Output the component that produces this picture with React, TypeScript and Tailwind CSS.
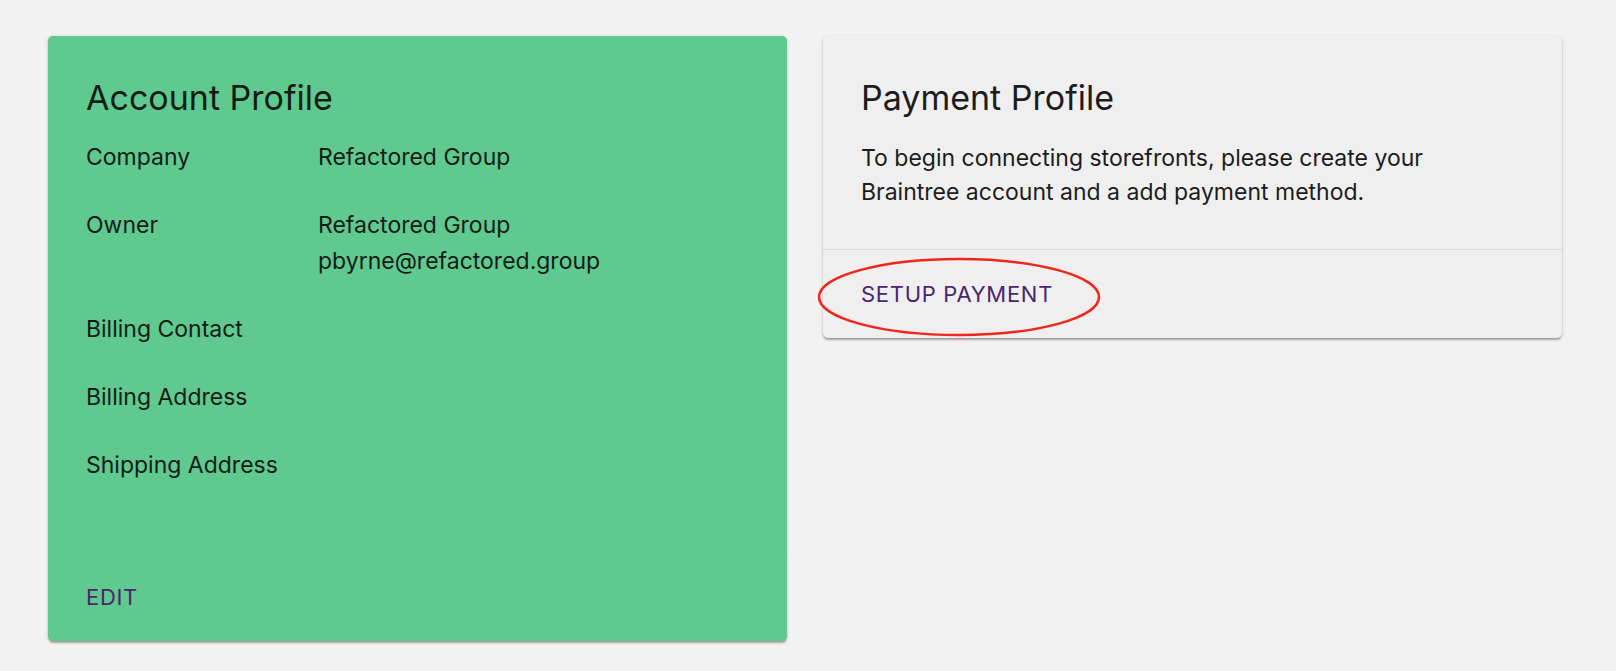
const purple = 'text-[#4b2670]'

function Row({ label, children }: { label: string; children?: React.ReactNode }) {
  return (
    <div className="mb-[32px] flex leading-[36px]">
      <div className="w-[232px] shrink-0">{label}</div>
      <div>{children}</div>
    </div>
  )
}

function AccountCard() {
  return (
    <div className="w-[739px] overflow-hidden rounded-[5px] bg-[#5fc98f] text-[#141c17] shadow-[0_3px_2px_-1px_rgba(0,0,0,0.22),0_1px_2px_0_rgba(0,0,0,0.14),0_1px_4px_0_rgba(0,0,0,0.12)]">
      <div className="px-[38px] pt-[38px] pb-[38px] text-[23px]">
        <h2 className="mb-[17px] text-[34px] leading-[48px] font-normal">Account Profile</h2>
        <Row label="Company">Refactored Group</Row>
        <Row label="Owner">
          <div>Refactored Group</div>
          <div>pbyrne@refactored.group</div>
        </Row>
        <Row label="Billing Contact" />
        <Row label="Billing Address" />
        <Row label="Shipping Address" />
      </div>
      <div className="flex h-[88px] items-center border-t border-[#66cc95] px-[38px]">
        <button className={`text-[22px] tracking-[0.7px] uppercase ${purple}`}>Edit</button>
      </div>
    </div>
  )
}

function PaymentCard() {
  return (
    <div className="w-[739px] rounded-[5px] bg-[#efefef] text-[#1c1c1c] shadow-[0_3px_2px_-1px_rgba(0,0,0,0.22),0_1px_2px_0_rgba(0,0,0,0.14),0_1px_4px_0_rgba(0,0,0,0.12)]">
      <div className="px-[38px] pt-[38px] pb-[40px]">
        <h2 className="mb-[19px] text-[34px] leading-[48px] font-normal">Payment Profile</h2>
        <p className="text-[23px] leading-[34px]">
          To begin connecting storefronts, please create your
          <br />
          Braintree account and a add payment method.
        </p>
      </div>
      <div className="relative flex h-[89px] items-center border-t border-[#dcdcdc] px-[38px]">
        <button className={`text-[22px] tracking-[0.7px] uppercase ${purple}`}>Setup Payment</button>
        {/* annotation circle */}
        <svg
          className="pointer-events-none absolute top-[7px] left-[-6px]"
          width="284"
          height="80"
          viewBox="0 0 284 80"
        >
          <ellipse cx="142" cy="40" rx="140" ry="38" fill="none" stroke="#f0261c" strokeWidth="2.5" />
        </svg>
      </div>
    </div>
  )
}

export default function App() {
  return (
    <div className="min-h-screen bg-[#f2f2f2] font-['Inter',sans-serif]">
      <div className="flex items-start gap-[36px] pt-[36px] pl-[48px]">
        <AccountCard />
        <PaymentCard />
      </div>
    </div>
  )
}
